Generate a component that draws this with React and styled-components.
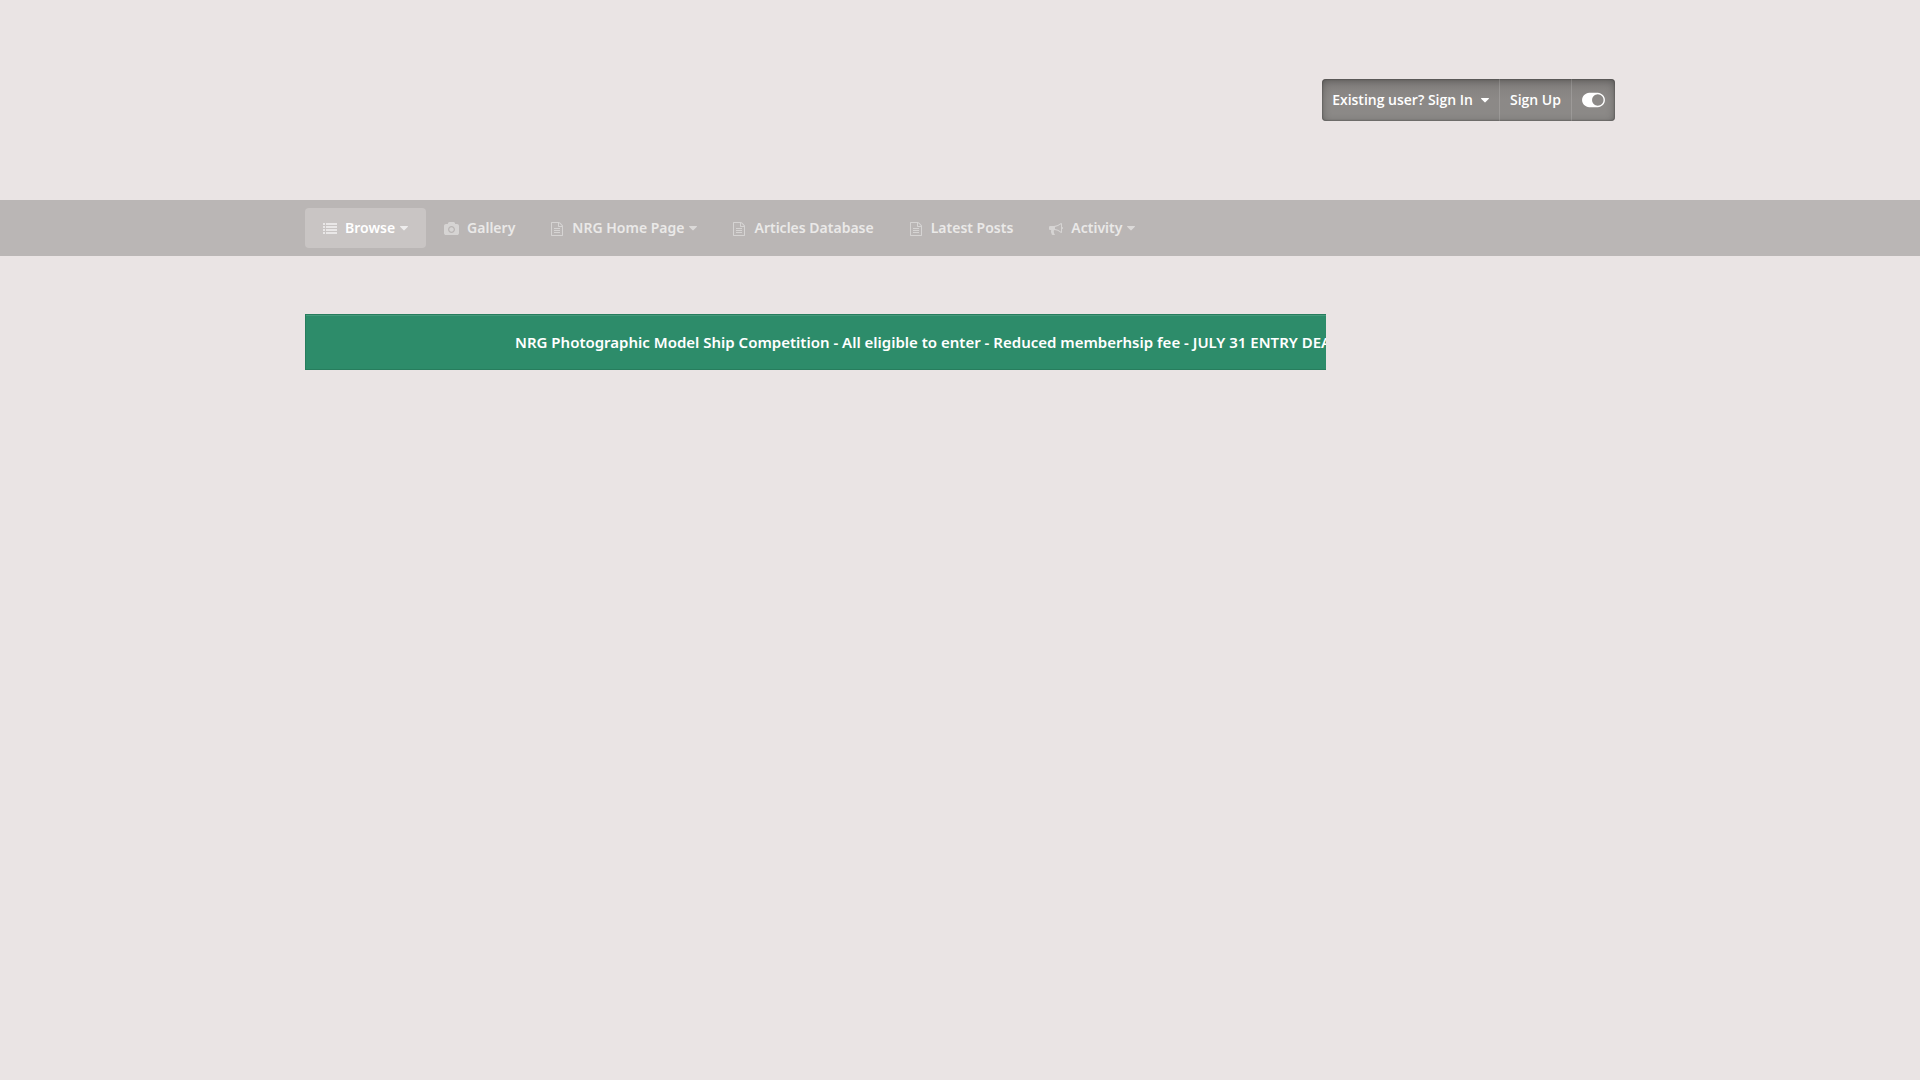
import React from "react";
import styled, { createGlobalStyle, css } from "styled-components";

const GlobalStyle = createGlobalStyle`
  *, *::before, *::after { box-sizing: border-box; }
  body {
    margin: 0;
    min-height: 100vh;
    background: #eae4e4;
    font-family: "Noto Sans", "Open Sans", sans-serif;
    font-size: 14px;
    line-height: 20px;
  }
`;

const Container = styled.div`
  width: calc(100% - 40px);
  max-width: 1310px;
  margin: 0 auto;
`;

const Header = styled.header`
  display: flex;
  align-items: center;
  min-height: 200px;
  font-family: "Open Sans", "Noto Sans", sans-serif;
`;

const HeaderInner = styled(Container)`
  display: flex;
  justify-content: flex-end;
`;

const UserBar = styled.div`
  display: flex;
  min-height: 42px;
  border-radius: 4px;
  background: linear-gradient(#827f7d, #8c8987 50%, #8b8987);
  box-shadow: inset 0 0 2px rgba(0, 0, 0, 0.5), inset 0 2px 8px rgba(0, 0, 0, 0.3);
`;

const userItem = css`
  display: flex;
  align-items: center;
  gap: 8px;
  padding: 0 10px;
  border: 0;
  background: none;
  color: #fff;
  font: inherit;
  font-weight: 600;
  text-decoration: none;
  cursor: pointer;
`;

const UserLink = styled.a`
  ${userItem}
  border-right: 1px solid rgba(255, 255, 255, 0.15);
`;

const UserButton = styled.button`
  ${userItem}
`;

const NavBar = styled.nav`
  background: #bab6b5;
`;

const NavList = styled.ul`
  display: flex;
  flex-wrap: wrap;
  margin: 0;
  padding: 8px 0;
  list-style: none;
`;

const NavLink = styled.a`
  display: flex;
  align-items: center;
  height: 40px;
  padding: 0 18px;
  border-radius: 4px;
  background: ${(p) => (p.$active ? "#c9c5c4" : "transparent")};
  color: ${(p) => (p.$active ? "#fff" : "#eae9e8")};
  font-weight: 600;
  text-decoration: none;
`;

const NavIcon = styled.span`
  display: flex;
  margin-right: 8px;
  padding-top: 1px;
  opacity: 0.6;
`;

const NavCaret = styled.span`
  display: flex;
  margin-left: 5px;
  opacity: 0.7;
`;

const Glyph = styled.svg`
  display: block;
  flex: none;
  fill: currentColor;
`;

const Main = styled(Container)`
  padding: 58px 0;
`;

const Ticker = styled.div`
  width: calc(100% - 289px);
  overflow: hidden;
  padding: 17px 0 17px 209px;
  border: 1px solid #277d5d;
  border-right-width: 0;
  background: #2d8c6a;
  box-shadow: inset 0 1px 0 rgba(255, 255, 255, 0.12);
  color: #fff;
  font-size: 15px;
  font-weight: 600;
  white-space: nowrap;
`;

const glyphs = {
  list: {
    width: 14,
    box: "0 0 14 14",
    path: "M0 1h2v2H0zM3 1h11v2H3zM0 4h2v2H0zM3 4h11v2H3zM0 7h2v2H0zM3 7h11v2H3zM0 10h2v2H0zM3 10h11v2H3z",
  },
  camera: {
    width: 15,
    box: "0 0 1920 1792",
    path: "M960 672q119 0 203.5 84.5t84.5 203.5-84.5 203.5-203.5 84.5-203.5-84.5-84.5-203.5 84.5-203.5 203.5-84.5zm704-416q106 0 181 75t75 181v896q0 106-75 181t-181 75h-1408q-106 0-181-75t-75-181v-896q0-106 75-181t181-75h224l51-136q19-49 69.5-84.5t103.5-35.5h512q53 0 103.5 35.5t69.5 84.5l51 136h224zm-704 1152q185 0 316.5-131.5t131.5-316.5-131.5-316.5-316.5-131.5-316.5 131.5-131.5 316.5 131.5 316.5 316.5 131.5z",
  },
  file: {
    width: 13,
    box: "128 0 1664 1792",
    path: "M1596 380q28 28 48 76t20 88v1152q0 40-28 68t-68 28h-1344q-40 0-68-28t-28-68v-1600q0-40 28-68t68-28h896q40 0 88 20t76 48zm-444-244v376h376q-10-29-22-41l-313-313q-12-12-41-22zm384 1528v-1024h-416q-40 0-68-28t-28-68v-416h-768v1536h1280zm-1024-864q0-14 9-23t23-9h704q14 0 23 9t9 23v64q0 14-9 23t-23 9h-704q-14 0-23-9t-9-23v-64zm736 224q14 0 23 9t9 23v64q0 14-9 23t-23 9h-704q-14 0-23-9t-9-23v-64q0-14 9-23t23-9h704zm0 256q14 0 23 9t9 23v64q0 14-9 23t-23 9h-704q-14 0-23-9t-9-23v-64q0-14 9-23t23-9h704z",
  },
  bullhorn: {
    width: 14,
    box: "0 0 1792 1792",
    path: "M1664 640q53 0 90.5 37.5t37.5 90.5-37.5 90.5-90.5 37.5v384q0 52-38 90t-90 38q-417-347-812-380-58 19-91 66t-31 100.5 40 92.5q-20 33-23 65.5t6 58 33.5 55 48 50 61.5 50.5q-29 58-111.5 83t-168.5 11.5-132-55.5q-7-23-29.5-87.5t-32-94.5-23-89-15-101 3.5-98.5 22-110.5h-122q-66 0-113-47t-47-113v-192q0-66 47-113t113-47h480q435 0 896-384 52 0 90 38t38 90v384zm-128 604v-954q-394 302-768 343v270q377 42 768 341z",
  },
  caret: {
    width: 8,
    box: "384 0 1024 1792",
    path: "M1408 704q0 26-19 45l-448 448q-19 19-45 19t-45-19l-448-448q-19-19-19-45t19-45 45-19h896q26 0 45 19t19 45z",
  },
  toggle: {
    width: 23,
    height: 20,
    box: "0 0 2048 1792",
    path: "M0 896q0-130 51-248.5t136.5-204 204-136.5 248.5-51h768q130 0 248.5 51t204 136.5 136.5 204 51 248.5-51 248.5-136.5 204-204 136.5-248.5 51h-768q-130 0-248.5-51t-204-136.5-136.5-204-51-248.5zm1408 512q104 0 198.5-40.5t163.5-109.5 109.5-163.5 40.5-198.5-40.5-198.5-109.5-163.5-163.5-109.5-198.5-40.5-198.5 40.5-163.5 109.5-109.5 163.5-40.5 198.5 40.5 198.5 109.5 163.5 163.5 109.5 198.5 40.5z",
  },
};

function Icon({ name }) {
  const { width, height = 14, box, path } = glyphs[name];
  return (
    <Glyph width={width} height={height} viewBox={box} aria-hidden="true">
      <path d={path} />
    </Glyph>
  );
}

const navItems = [
  { label: "Browse", icon: "list", menu: true, active: true },
  { label: "Gallery", icon: "camera" },
  { label: "NRG Home Page", icon: "file", menu: true },
  { label: "Articles Database", icon: "file" },
  { label: "Latest Posts", icon: "file" },
  { label: "Activity", icon: "bullhorn", menu: true },
];

export default function App() {
  return (
    <>
      <GlobalStyle />
      <Header>
        <HeaderInner>
          <UserBar>
            <UserLink href="#signin">
              Existing user? Sign In
              <Icon name="caret" />
            </UserLink>
            <UserLink href="#signup">Sign Up</UserLink>
            <UserButton type="button" aria-label="Toggle theme">
              <Icon name="toggle" />
            </UserButton>
          </UserBar>
        </HeaderInner>
      </Header>
      <NavBar>
        <Container>
          <NavList>
            {navItems.map((item) => (
              <li key={item.label}>
                <NavLink href="#" $active={item.active}>
                  <NavIcon>
                    <Icon name={item.icon} />
                  </NavIcon>
                  {item.label}
                  {item.menu && (
                    <NavCaret>
                      <Icon name="caret" />
                    </NavCaret>
                  )}
                </NavLink>
              </li>
            ))}
          </NavList>
        </Container>
      </NavBar>
      <Main as="main">
        <Ticker>
          NRG Photographic Model Ship Competition - All eligible to enter - Reduced memberhsip fee - JULY 31 ENTRY DEADLINE
        </Ticker>
      </Main>
    </>
  );
}
